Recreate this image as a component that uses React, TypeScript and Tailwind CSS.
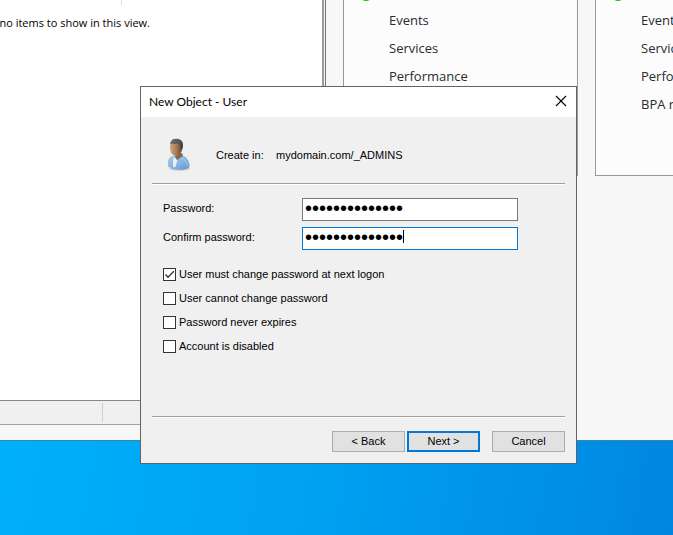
import type { ReactNode } from "react";
import { useState } from "react";

const uiFont = "font-['Open_Sans','Noto_Sans',sans-serif]";
const titleFont = "font-['Lato','Open_Sans',sans-serif]";
const dialogFont = "font-['Liberation_Sans',Arial,sans-serif]";

function RoleCard({ items, className }: { items: string[]; className: string }) {
  return (
    <section className={`h-[176px] shrink-0 overflow-hidden border-x border-b border-[#999] bg-[#fcfcfc] ${className}`}>
      <div className="flex h-[6px] pl-[15px]">
        <span className="-mt-[13px] size-[14px] rounded-full bg-[#10c010]" />
      </div>
      <ul className="pl-[45px] text-[13px] leading-7 whitespace-nowrap text-[#2b2b2b]">
        {items.map((item) => (
          <li key={item}>{item}</li>
        ))}
      </ul>
    </section>
  );
}

function ServerManager() {
  return (
    <main className={`flex items-start overflow-hidden border-b border-[#3f83ad] bg-[#f7f7f7] ${uiFont}`}>
      <div className="flex h-[440px] w-[326px] shrink-0 flex-col">
        <div className="flex grow flex-col border-r border-[#777] pr-px">
          <div className="flex grow flex-col border-r-2 border-b border-r-[#9a9aa2] border-b-[#828790] bg-white">
            <div className="h-[5px] w-[122px] border-r border-[#ddd]" />
            <div className="mt-[9px] flex w-[150px] justify-end overflow-hidden text-[11px] leading-[18px] whitespace-nowrap text-black">
              There are no items to show in this view.
            </div>
          </div>
        </div>
        <div className="flex h-[24px] border-r border-b border-[#a0a0a0] bg-[#f0f0f0] py-[2px]">
          <div className="w-[103px] border-r border-[#d0d0d0]" />
        </div>
        <div className="h-[15px]" />
      </div>
      <RoleCard className="ml-[17px] w-[235px]" items={["Events", "Services", "Performance"]} />
      <RoleCard className="ml-[17px] w-[235px]" items={["Events", "Services", "Performance", "BPA results"]} />
    </main>
  );
}

function UserIcon() {
  return (
    <svg width="26" height="34" viewBox="0 0 26 34" aria-hidden="true">
      <defs>
        <linearGradient id="face" x1="0" y1="0" x2="1" y2="0">
          <stop offset="0" stopColor="#d3aa84" />
          <stop offset="0.5" stopColor="#a87b55" />
          <stop offset="1" stopColor="#60442e" />
        </linearGradient>
        <linearGradient id="shirt" x1="0" y1="0" x2="1" y2="1">
          <stop offset="0" stopColor="#a9cdea" />
          <stop offset="0.6" stopColor="#82b2de" />
          <stop offset="1" stopColor="#5f93c6" />
        </linearGradient>
        <linearGradient id="hair" x1="0" y1="0" x2="1" y2="1">
          <stop offset="0" stopColor="#787878" />
          <stop offset="1" stopColor="#333" />
        </linearGradient>
      </defs>
      <ellipse cx="13.500" cy="30.500" rx="10.500" ry="2.200" fill="#c9c9c9" />
      <path d="M2 23c1-4 3-5 6-5l7-1c5 1 8 5 8.500 10 .3 2-.5 3-3.500 4-5 1.500-12 1-15-1-3-1-3.500-2-3-7z" fill="url(#shirt)" />
      <path d="M7.500 19.500l2 1 2 2-2.500 7-2-1v-6z" fill="#e6f1fa" />
      <path d="M9 15h7l1 3-6 4-2-4z" fill="#8f6644" />
      <path d="M4 7c1-4 3-5 6-5 4 0 6.500 3 6.500 7s-1.500 6-4.500 8c-2 1.500-4 1-6-1-1.500-1.500-2-4-2-9z" fill="url(#face)" />
      <path d="M4 6C5 2 7 .800 10 .800c5 0 7 2.500 7 5.700 0 2-.5 4-1.500 5l-1-1c0-3-.5-4-2.500-5-3 1-5.500 0-8 .5z" fill="url(#hair)" />
      <path d="M15 20c4 1.500 6 4 6.500 8" fill="none" stroke="#a8cfed" strokeWidth="1" />
    </svg>
  );
}

function Separator() {
  return <div className="h-[2px] border-t border-b border-t-[#a0a0a0] border-b-white" />;
}

function PasswordField({
  id,
  label,
  active = false,
}: {
  id: string;
  label: string;
  active?: boolean;
}) {
  return (
    <div className="flex items-center">
      <label htmlFor={id} className="w-[139px] shrink-0 pb-[2px]">
        {label}
      </label>
      <div className="relative mr-[36px] grow">
        <input
          id={id}
          type="password"
          defaultValue="Passw0rd123456"
          className={`block h-[23px] w-full border bg-white pr-1 pb-[2px] pl-[2px] text-[20px] leading-5 text-black outline-none ${
            active ? "border-[#0078d7] caret-transparent" : "border-[#7a7a7a]"
          }`}
        />
        {active && <span className="absolute top-[3px] left-[101px] h-[13px] w-px bg-black" />}
      </div>
    </div>
  );
}

function CheckOption({ label, initial = false }: { label: string; initial?: boolean }) {
  const [checked, setChecked] = useState(initial);
  return (
    <label className="flex h-[13px] items-center gap-[3px]">
      <span className="relative size-[13px] shrink-0">
        <input
          type="checkbox"
          checked={checked}
          onChange={(e) => setChecked(e.target.checked)}
          className="block size-[13px] appearance-none border border-[#333] bg-white"
        />
        {checked && (
          <svg className="pointer-events-none absolute inset-0" width="13" height="13" viewBox="0 0 13 13" aria-hidden="true">
            <path d="M2.500 6.500L5 9.200L10.800 3.300" fill="none" stroke="#333" strokeWidth="1.300" />
          </svg>
        )}
      </span>
      <span>{label}</span>
    </label>
  );
}

function DialogButton({ children, primary = false }: { children: ReactNode; primary?: boolean }) {
  return (
    <button
      type="button"
      className={`h-[21px] w-[73px] bg-[#e1e1e1] text-center leading-[17px] ${
        primary ? "border-2 border-[#0078d7]" : "border border-[#adadad]"
      }`}
    >
      {children}
    </button>
  );
}

function NewUserDialog() {
  return (
    <div
      role="dialog"
      aria-labelledby="dialog-title"
      className={`absolute top-[86px] left-[140px] w-[437px] border border-[#606468] bg-[#f0f0f0] text-[11px] leading-[13px] text-black ${dialogFont}`}
    >
      <header className="flex h-[30px] items-center justify-between bg-white pr-[9px] pb-[2px] pl-2">
        <h1 id="dialog-title" className={`text-[12px] ${titleFont}`}>
          New Object - User
        </h1>
        <button type="button" aria-label="Close">
          <svg width="12" height="12" viewBox="0 0 12 12" aria-hidden="true">
            <path d="M1 1L11 11M11 1L1 11" stroke="#000" strokeWidth="1.100" />
          </svg>
        </button>
      </header>
      <div className="px-[11px]">
        <div className="flex h-[66px] items-center pt-[10px] pl-[14px]">
          <UserIcon />
          <span className="ml-6 w-[60px]">Create in:</span>
          <span>mydomain.com/_ADMINS</span>
        </div>
        <Separator />
        <form className="px-[11px] pt-[13px] pb-[63px]">
          <div className="flex flex-col gap-[6px]">
            <PasswordField id="password" label="Password:" />
            <PasswordField id="confirm" label="Confirm password:" active />
          </div>
          <div className="mt-[18px] flex flex-col items-start gap-[11px]">
            <CheckOption label="User must change password at next logon" initial />
            <CheckOption label="User cannot change password" />
            <CheckOption label="Password never expires" />
            <CheckOption label="Account is disabled" />
          </div>
        </form>
        <Separator />
        <footer className="flex justify-end pt-[13px] pb-[11px]">
          <div className="mr-3 flex gap-[2px]">
            <DialogButton>&lt; Back</DialogButton>
            <DialogButton primary>Next &gt;</DialogButton>
          </div>
          <DialogButton>Cancel</DialogButton>
        </footer>
      </div>
    </div>
  );
}

export default function App() {
  return (
    <div className="relative min-h-screen overflow-hidden bg-linear-[100deg] from-[#00b4fa] via-[#00a2f2] to-[#0086e2]">
      <ServerManager />
      <NewUserDialog />
    </div>
  );
}
